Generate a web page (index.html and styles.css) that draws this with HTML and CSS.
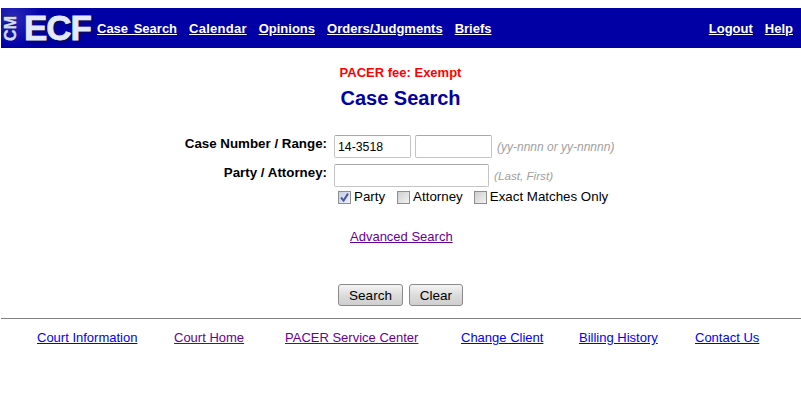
FILE: index.html
```html
<!DOCTYPE html>
<html lang="en">
<head>
    <meta charset="UTF-8">
    <title>CM/ECF Case Search</title>
    <link rel="stylesheet" href="styles.css">
</head>
<body>

<div class="topbar">
    <div class="logo">
        <span class="logo-cm">CM</span>
        <span class="logo-ecf">ECF</span>
    </div>
    <a href="#" class="spaced">Case Search</a>
    <a href="#" class="calendar">Calendar</a>
    <a href="#">Opinions</a>
    <a href="#">Orders/Judgments</a>
    <a href="#">Briefs</a>
    <a href="#" class="push">Logout</a>
    <a href="#" class="help">Help</a>
</div>

<div class="fee">PACER fee: Exempt</div>
<h1 class="title">Case Search</h1>

<form class="search">
    <label class="field-label">Case Number / Range:</label>
    <div class="field-row">
        <input type="text" class="box short" value="14-3518">
        <input type="text" class="box short">
        <span class="hint">(yy-nnnn or yy-nnnnn)</span>
    </div>

    <label class="field-label party-label">Party / Attorney:</label>
    <div class="field-row party-row">
        <input type="text" class="box wide">
        <span class="hint name-hint">(Last, First)</span>
    </div>

    <div class="checks">
        <label class="check-item">
            <span class="check on">
                <svg width="11" height="11" viewBox="0 0 11 11"><path d="M2 5.5 L4.6 8.6 L9 1.6" fill="none" stroke="#4a5a9c" stroke-width="2"/></svg>
            </span>Party
        </label>
        <label class="check-item"><span class="check"></span>Attorney</label>
        <label class="check-item exact"><span class="check"></span>Exact Matches Only</label>
    </div>

    <a href="#" class="advanced">Advanced Search</a>

    <div class="buttons">
        <button type="button" class="btn btn-search">Search</button>
        <button type="button" class="btn btn-clear">Clear</button>
    </div>
</form>

<hr class="rule">

<div class="footer">
    <a href="#">Court Information</a>
    <a href="#" class="visited">Court Home</a>
    <a href="#" class="visited">PACER Service Center</a>
    <a href="#">Change Client</a>
    <a href="#">Billing History</a>
    <a href="#">Contact Us</a>
</div>

</body>
</html>
```

FILE: styles.css
```css
body {
    margin: 0;
    background-color: #fff;
    font-family: "Liberation Sans", Arial, sans-serif;
    font-size: 13px;
    color: #000;
}
.topbar {
    display: flex;
    align-items: center;
    height: 40px;
    margin: 8px 0 0 1px;
    background-color: #0000a5;
}
.topbar a {
    color: #fff;
    font-weight: bold;
    margin-right: 12px;
}
.topbar a.spaced {
    word-spacing: 2px;
}
.topbar a.calendar {
    letter-spacing: 0.25px;
}
.topbar a.push {
    margin-left: auto;
    margin-right: 12px;
}
.topbar a.help {
    margin-right: 8px;
}
.logo {
    display: flex;
    align-items: center;
    width: 96px;
    height: 40px;
    overflow: hidden;
    background: radial-gradient(circle at 12px 10px, #2a2ab8, #0000a5 30px);
    font-weight: bold;
}
.logo-cm {
    writing-mode: vertical-rl;
    transform: rotate(180deg);
    font-size: 16px;
    line-height: 14px;
    margin-left: 3px;
    color: #d5dcee;
    -webkit-text-stroke: 0.4px #d5dcee;
    text-shadow: 1px -1px 1px #10105a;
}
.logo-ecf {
    margin-left: 6px;
    font-size: 35px;
    letter-spacing: -1px;
    color: #e3e9fa;
    -webkit-text-stroke: 0.8px #e3e9fa;
    text-shadow: 2px 2px 3px #0c0c55;
}
.fee {
    margin-top: 17px;
    text-align: center;
    color: #f00;
    font-weight: bold;
}
.title {
    margin: 7px 0 0;
    text-align: center;
    color: #0000a5;
    font-size: 20px;
}
.search {
    display: grid;
    grid-template-columns: 327px auto;
    column-gap: 7px;
    margin-top: 25px;
    font-size: 13.33px;
}
.field-label {
    text-align: right;
    font-weight: bold;
    padding-top: 1px;
}
.field-row {
    display: flex;
    align-items: center;
    gap: 4px;
    height: 23px;
}
.party-label {
    margin-top: 6px;
}
.party-row {
    margin-top: 6px;
    gap: 5px;
}
.box {
    box-sizing: border-box;
    height: 23px;
    padding: 1px 3px;
    border: 1px solid #c4c4c4;
    border-top-color: #a8a8a8;
    border-radius: 2px;
    font-family: inherit;
    font-size: 12.3px;
    color: #000;
}
.short {
    width: 77px;
}
.wide {
    width: 155px;
}
.hint {
    margin-left: 1px;
    color: #a0a0a0;
    font-size: 12px;
    font-style: italic;
}
.name-hint {
    margin-left: 0;
    font-size: 11.7px;
}
.checks {
    grid-column: 2;
    display: flex;
    gap: 12px;
    margin-top: 2px;
    padding-left: 4px;
    height: 16px;
    line-height: 16px;
}
.check-item {
    display: flex;
    align-items: center;
    gap: 3px;
}
.check-item.exact {
    margin-left: -1px;
}
.check {
    box-sizing: border-box;
    display: flex;
    align-items: center;
    justify-content: center;
    width: 13px;
    height: 13px;
    border: 1px solid #8e8f8f;
    background: linear-gradient(135deg, #cfcfcf, #f2f2f2);
}
.check.on {
    background: linear-gradient(135deg, #c8cfe6, #eef0f8);
}
.advanced {
    grid-column: 2;
    justify-self: start;
    margin: 24px 0 0 16px;
    color: #660099;
    font-size: 13px;
}
.buttons {
    grid-column: 2;
    display: flex;
    gap: 6px;
    margin: 40px 0 0 4px;
}
.btn {
    box-sizing: border-box;
    height: 22px;
    padding: 0;
    border: 1px solid #8a8a8a;
    border-radius: 3px;
    background: linear-gradient(#f4f4f4, #dcdcdc 50%, #cfcfcf);
    font-family: inherit;
    font-size: 13.5px;
    color: #000;
}
.btn-search {
    width: 65px;
}
.btn-clear {
    width: 54px;
}
.rule {
    height: 0;
    margin: 12px 0 0 1px;
    border: 0;
    border-top: 1px solid #808080;
}
.footer {
    display: grid;
    grid-template-columns: 137px 111px 176px 118px 116px auto;
    margin-top: 11px;
    padding-left: 37px;
}
.footer a {
    justify-self: start;
    color: #00f;
}
.footer a.visited {
    color: #660099;
}
```
